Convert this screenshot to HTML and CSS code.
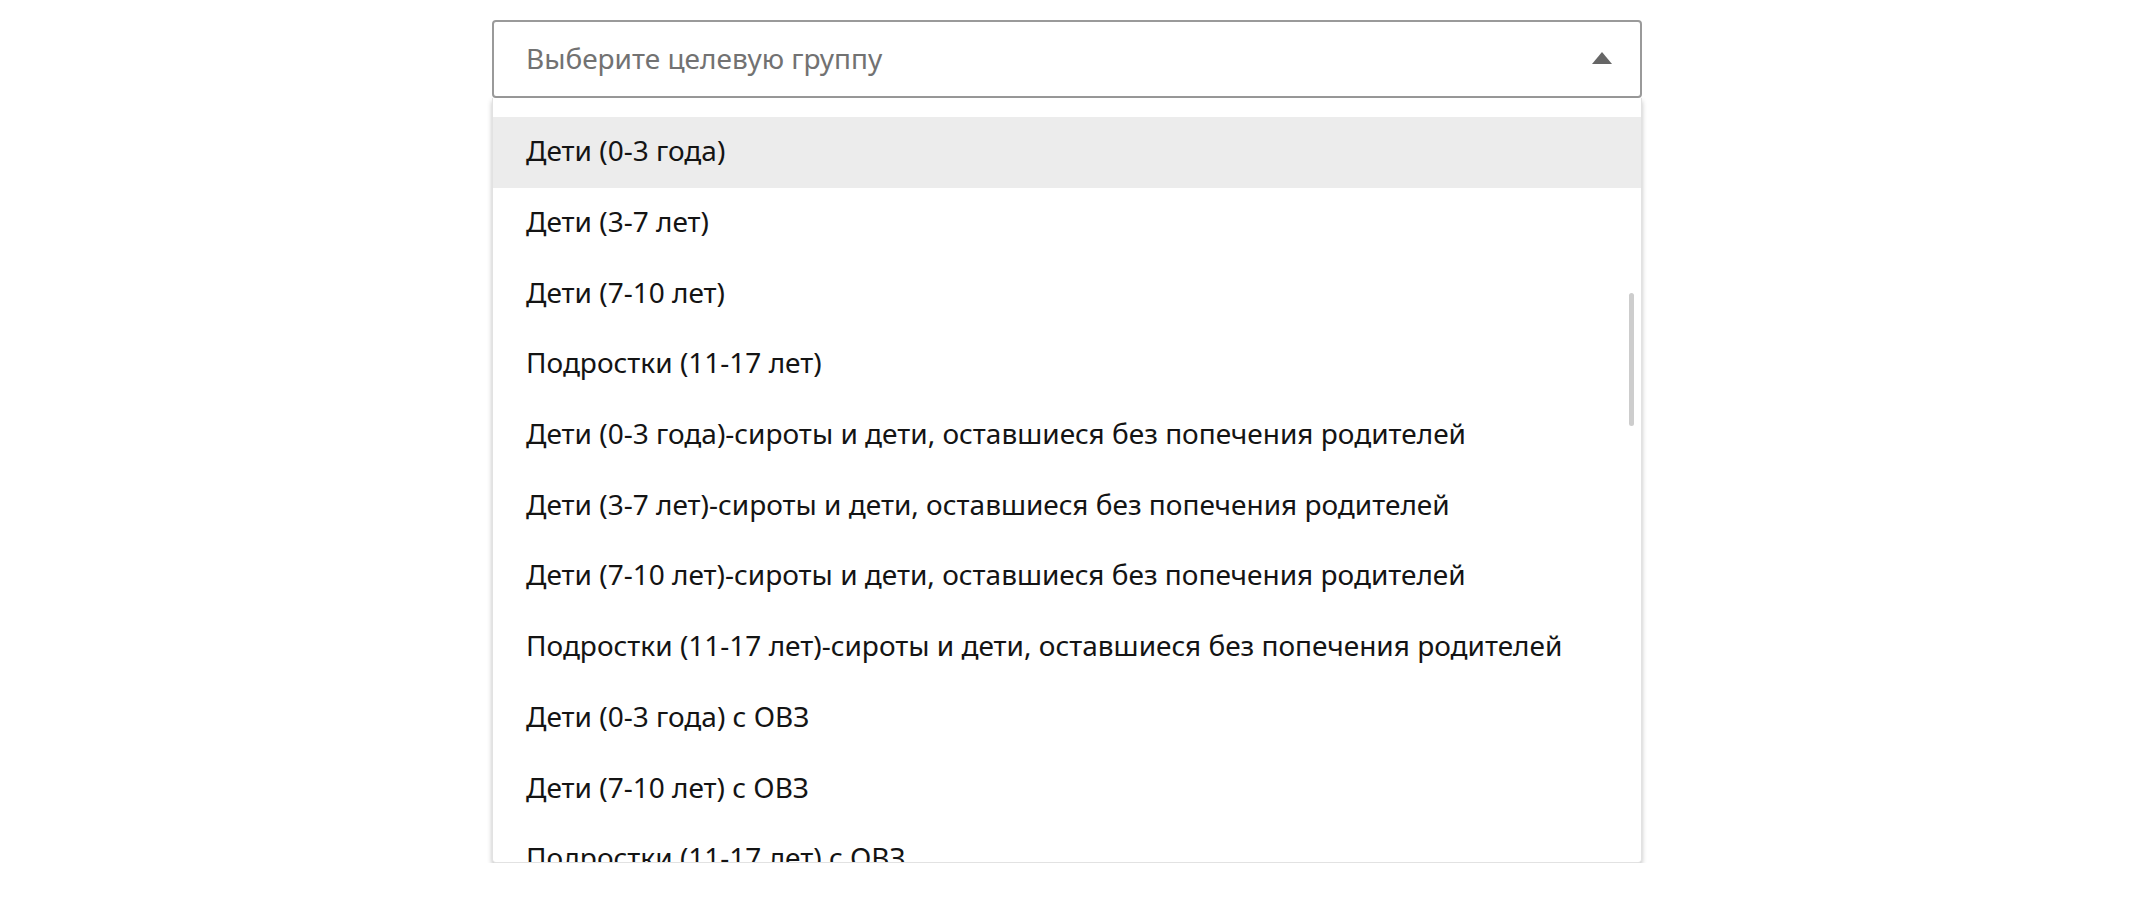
FILE: index.html
```html
<!DOCTYPE html>
<html lang="ru">
<head>
<meta charset="utf-8">
<link rel="stylesheet" href="styles.css">
</head>
<body>
<div class="wrap">
  <div class="select">
    <span class="placeholder">Выберите целевую группу</span>
    <span class="arrow"></span>
  </div>
  <div class="dropdown">
    <ul class="list">
      <li class="item active">Дети (0-3 года)</li>
      <li class="item">Дети (3-7 лет)</li>
      <li class="item">Дети (7-10 лет)</li>
      <li class="item">Подростки (11-17 лет)</li>
      <li class="item">Дети (0-3 года)-сироты и дети, оставшиеся без попечения родителей</li>
      <li class="item">Дети (3-7 лет)-сироты и дети, оставшиеся без попечения родителей</li>
      <li class="item">Дети (7-10 лет)-сироты и дети, оставшиеся без попечения родителей</li>
      <li class="item">Подростки (11-17 лет)-сироты и дети, оставшиеся без попечения родителей</li>
      <li class="item">Дети (0-3 года) с ОВЗ</li>
      <li class="item">Дети (7-10 лет) с ОВЗ</li>
      <li class="item">Подростки (11-17 лет) с ОВЗ</li>
    </ul>
    <div class="scrollbar"></div>
  </div>
</div>
</body>
</html>
```
FILE: styles.css
```css
html, body {
  margin: 0;
  padding: 0;
  background: #ffffff;
}
body {
  font-family: "Noto Sans", "Open Sans", sans-serif;
  color: #141414;
}
.wrap {
  width: 1150px;
  margin-left: 492px;
  padding-top: 20px;
}
.select {
  box-sizing: border-box;
  height: 78px;
  border: 2px solid #9a9a9a;
  border-radius: 4px;
  display: flex;
  align-items: center;
  justify-content: space-between;
  padding: 0 28px 0 32px;
  background: #fff;
}
.placeholder {
  font-size: 28px;
  color: #727272;
  margin-top: -2px;
}
.arrow {
  width: 0;
  height: 0;
  border-left: 10.5px solid transparent;
  border-right: 10.5px solid transparent;
  border-bottom: 12px solid #666;
  margin-bottom: 2px;
}
.dropdown {
  position: relative;
  box-sizing: border-box;
  height: 765px;
  border: 1px solid #e2e2e2;
  border-top: none;
  border-radius: 0 0 4px 4px;
  box-shadow: 0 3px 5px rgba(0, 0, 0, 0.25);
  overflow: hidden;
  padding-top: 19px;
  background: #fff;
}
.list {
  list-style: none;
  margin: 0;
  padding: 0;
}
.item {
  box-sizing: border-box;
  height: 70.7px;
  display: flex;
  align-items: center;
  padding-left: 33px;
  padding-bottom: 4px;
  font-size: 28px;
  white-space: nowrap;
}
.item.active {
  background: #ececec;
}
.scrollbar {
  position: absolute;
  left: 1136px;
  top: 195px;
  width: 5px;
  height: 133px;
  border-radius: 3px;
  background: #cdcdcd;
}
```
